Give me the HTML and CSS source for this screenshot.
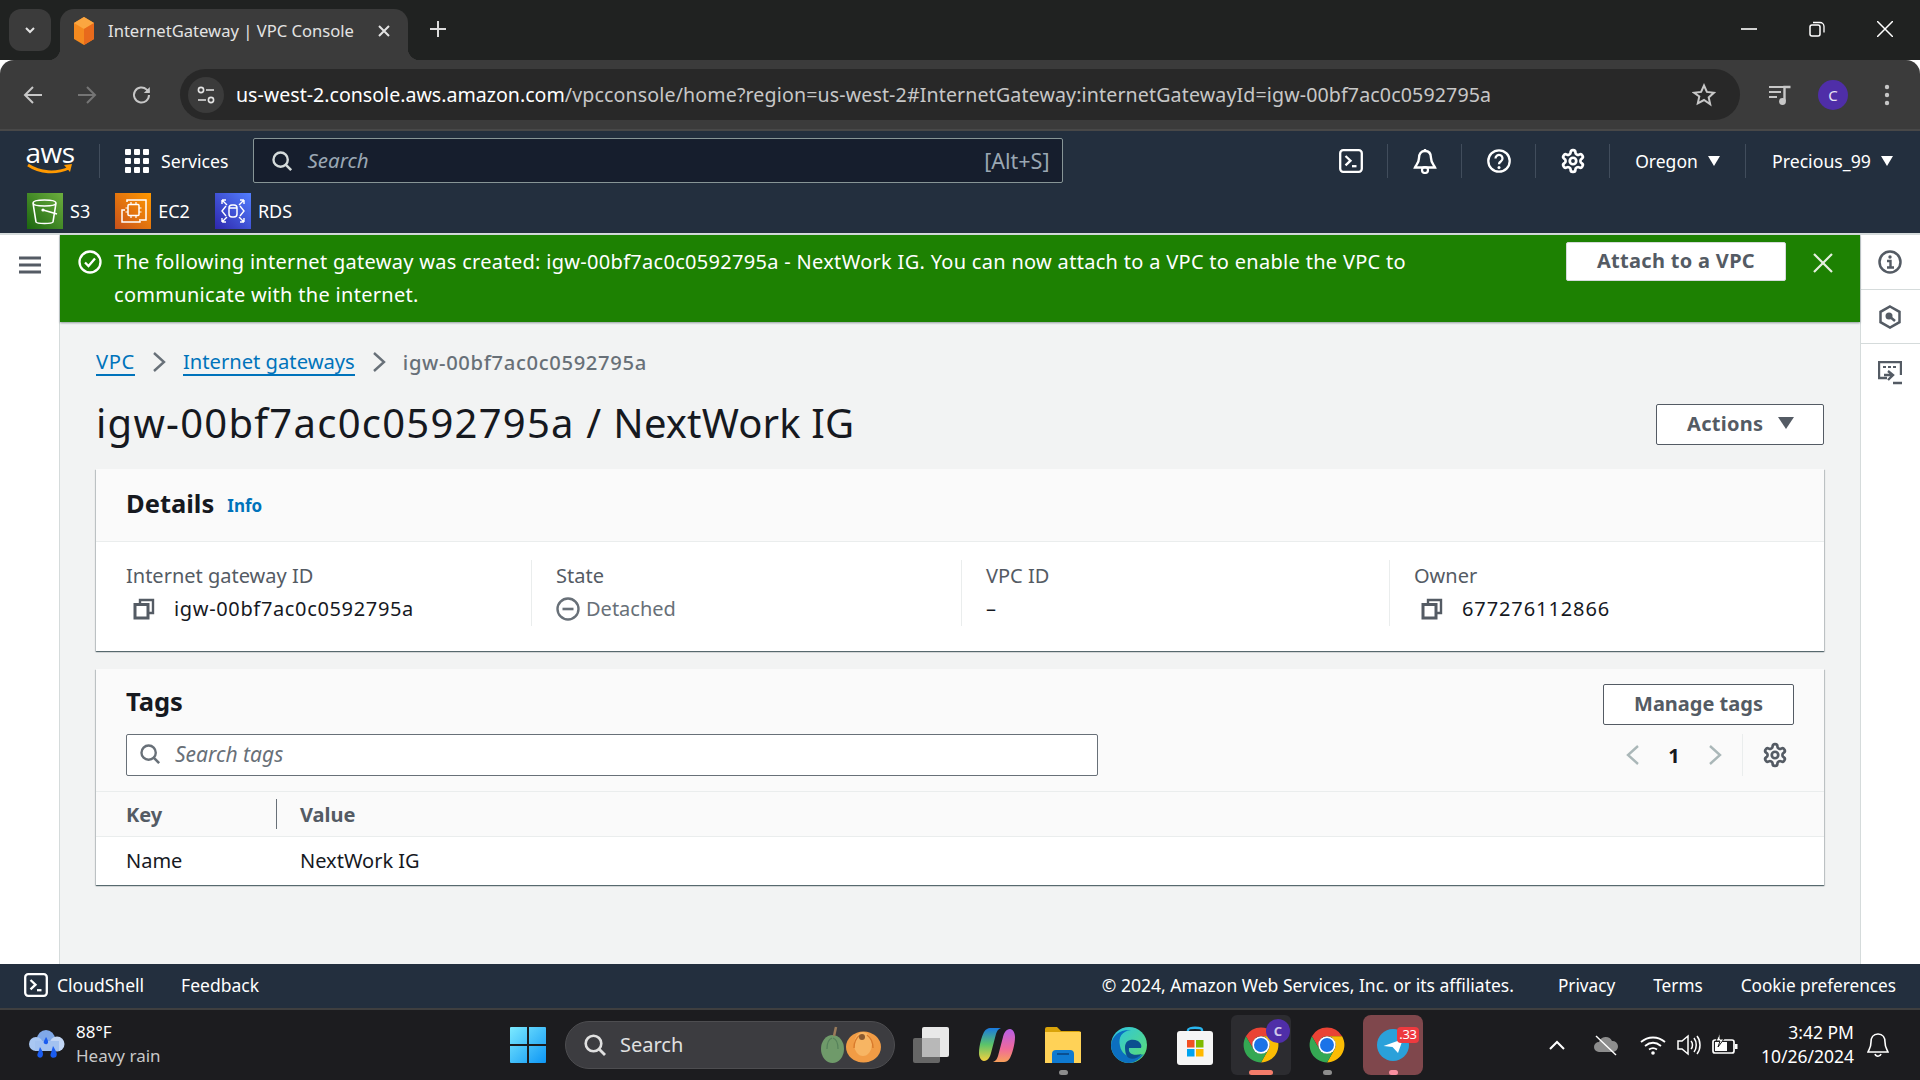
FILE: index.html
```html
<!DOCTYPE html>
<html lang="en">
<head>
<meta charset="utf-8">
<title>InternetGateway | VPC Console</title>
<link rel="stylesheet" href="styles.css">
</head>
<body>
<svg class="defs" width="0" height="0" aria-hidden="true">
  <symbol id="gear" viewBox="0 0 24 24"><path fill="none" stroke="currentColor" stroke-width="2.500" d="M12.22 2h-.44a2 2 0 0 0-2 2v.18a2 2 0 0 1-1 1.73l-.43.25a2 2 0 0 1-2 0l-.15-.08a2 2 0 0 0-2.73.73l-.22.38a2 2 0 0 0 .73 2.73l.15.1a2 2 0 0 1 1 1.72v.51a2 2 0 0 1-1 1.74l-.15.09a2 2 0 0 0-.73 2.73l.22.38a2 2 0 0 0 2.73.73l.15-.08a2 2 0 0 1 2 0l.43.25a2 2 0 0 1 1 1.73V20a2 2 0 0 0 2 2h.44a2 2 0 0 0 2-2v-.18a2 2 0 0 1 1-1.73l.43-.25a2 2 0 0 1 2 0l.15.08a2 2 0 0 0 2.73-.73l.22-.39a2 2 0 0 0-.73-2.73l-.15-.08a2 2 0 0 1-1-1.74v-.5a2 2 0 0 1 1-1.74l.15-.09a2 2 0 0 0 .73-2.73l-.22-.38a2 2 0 0 0-2.73-.73l-.15.08a2 2 0 0 1-2 0l-.43-.25a2 2 0 0 1-1-1.73V4a2 2 0 0 0-2-2z"/><circle cx="12" cy="12" r="3" fill="none" stroke="currentColor" stroke-width="2.500"/></symbol>
  <symbol id="mag" viewBox="0 0 24 24"><circle cx="10.5" cy="10.5" r="7.8" fill="none" stroke="currentColor" stroke-width="2.6"/><path d="M16 16l6 6" stroke="currentColor" stroke-width="2.8" fill="none"/></symbol>
  <symbol id="term" viewBox="0 0 24 24"><rect x="1.2" y="1.2" width="21.6" height="21.6" rx="3" fill="none" stroke="currentColor" stroke-width="2.3"/><path d="M6.5 7l5 4.7-5 4.7" fill="none" stroke="currentColor" stroke-width="2.3"/><path d="M13 17.2h4.5" stroke="currentColor" stroke-width="2.3"/></symbol>
  <symbol id="copy" viewBox="0 0 22 22"><path d="M7 6V2h13v13h-5" fill="none" stroke="currentColor" stroke-width="2.4"/><rect x="2" y="6.5" width="13" height="13.5" fill="none" stroke="currentColor" stroke-width="3"/></symbol>
  <symbol id="chrome" viewBox="0 0 48 48"><path fill="#ea4335" d="M24 2A22 22 0 0 1 43.05 13H24a11 11 0 0 0-9.53 16.5L4.95 13A22 22 0 0 1 24 2z"/><path fill="#fbbc04" d="M43.05 13A22 22 0 0 1 24 46l9.53-16.5A11 11 0 0 0 24 13z"/><path fill="#34a853" d="M24 46A22 22 0 0 1 4.95 13l9.52 16.5a11 11 0 0 0 19.06 0z"/><circle cx="24" cy="24" r="11" fill="#fff"/><circle cx="24" cy="24" r="8.8" fill="#1a73e8"/></symbol>
</svg>

<header class="tabstrip">
  <div class="tabsearch"><svg width="14" height="14" viewBox="0 0 14 14"><path d="M3 5l4 4 4-4" fill="none" stroke="#e3e3e3" stroke-width="2"/></svg></div>
  <div class="tab">
    <svg class="favicon" width="24" height="30" viewBox="0 0 24 30"><path fill="#f58a1f" d="M12 1l10 6v16l-10 6-10-6V7z"/><path fill="#fba640" d="M12 1l10 6-10 6L2 7z"/><path fill="#e86a1c" d="M12 13v16l10-6V7z"/></svg>
    <span class="tabtitle">InternetGateway | VPC Console</span>
    <svg class="tabx" width="14" height="14" viewBox="0 0 14 14"><path d="M2 2l10 10M12 2L2 12" stroke="#e3e3e3" stroke-width="2"/></svg>
  </div>
  <svg class="tabplus" width="18" height="18" viewBox="0 0 18 18"><path d="M9 1v16M1 9h16" stroke="#dcdcdc" stroke-width="2"/></svg>
  <div class="winctl">
    <svg width="16" height="16" viewBox="0 0 16 16"><path d="M0 8h16" stroke="#fff" stroke-width="1.6"/></svg>
    <svg width="16" height="16" viewBox="0 0 16 16"><rect x="1" y="4" width="10" height="11" rx="2" fill="none" stroke="#fff" stroke-width="1.5"/><path d="M4 1.5h7a4 4 0 0 1 4 4v6" fill="none" stroke="#fff" stroke-width="1.3"/></svg>
    <svg width="16" height="16" viewBox="0 0 16 16"><path d="M0 0l16 16M16 0L0 16" stroke="#fff" stroke-width="1.5"/></svg>
  </div>
</header>

<div class="toolbar">
  <svg class="tb tb-back" width="20" height="20" viewBox="0 0 20 20"><path d="M19 10H2M10 2l-8 8 8 8" fill="none" stroke="#c7c7c7" stroke-width="2"/></svg>
  <svg class="tb tb-fwd" width="20" height="20" viewBox="0 0 20 20"><path d="M1 10h17M10 2l8 8-8 8" fill="none" stroke="#757575" stroke-width="2"/></svg>
  <svg class="tb tb-reload" width="20" height="20" viewBox="0 0 20 20"><path d="M17 10a7.5 7.5 0 1 1-2.3-5.4L17 7" fill="none" stroke="#c7c7c7" stroke-width="2"/><path d="M17.8 2v6h-6z" fill="#c7c7c7"/></svg>
  <div class="omnibox">
    <div class="sitebtn"><svg width="20" height="20" viewBox="0 0 20 20"><circle cx="5" cy="5" r="2.6" fill="none" stroke="#e3e3e3" stroke-width="1.6"/><path d="M10 5h8M2 15h8" stroke="#e3e3e3" stroke-width="1.6"/><circle cx="15" cy="15" r="2.6" fill="none" stroke="#e3e3e3" stroke-width="1.6"/></svg></div>
    <div class="url"><span class="urlhost">us-west-2.console.aws.amazon.com</span><span class="urlpath">/vpcconsole/home?region=us-west-2#InternetGateway:internetGatewayId=igw-00bf7ac0c0592795a</span></div>
    <svg class="star" width="24" height="24" viewBox="0 0 24 24"><path d="M12 2.5l2.9 6.4 7 .8-5.2 4.7 1.5 6.9L12 17l-6.2 3.3 1.5-6.9L2.100 9.700l7-.8z" fill="none" stroke="#c7c7c7" stroke-width="2"/></svg>
  </div>
  <svg class="tb tb-media" width="24" height="22" viewBox="0 0 24 22"><path d="M1 3h15M1 8h12M1 13h8" stroke="#c7c7c7" stroke-width="2"/><path d="M16.500 17V3h6" fill="none" stroke="#c7c7c7" stroke-width="2.400"/><circle cx="14.500" cy="17.500" r="3.400" fill="#c7c7c7"/></svg>
  <div class="avatar">C</div>
  <svg class="tb tb-menu" width="6" height="24" viewBox="0 0 6 24"><circle cx="3" cy="4" r="2.200" fill="#c7c7c7"/><circle cx="3" cy="12" r="2.200" fill="#c7c7c7"/><circle cx="3" cy="20" r="2.200" fill="#c7c7c7"/></svg>
</div>

<nav class="awshead">
  <div class="nav1">
    <div class="awslogo"><span class="awsword">aws</span><svg width="46" height="12" viewBox="0 0 46 12"><path d="M1 2c12 8 28 9 41 3" fill="none" stroke="#f90" stroke-width="2.800"/><path d="M37 2l8-1-2 8z" fill="#f90"/></svg></div>
    <div class="services">
      <svg width="24" height="24" viewBox="0 0 24 24" fill="#fff"><rect width="6" height="6" rx="1"/><rect x="9" width="6" height="6" rx="1"/><rect x="18" width="6" height="6" rx="1"/><rect y="9" width="6" height="6" rx="1"/><rect x="9" y="9" width="6" height="6" rx="1"/><rect x="18" y="9" width="6" height="6" rx="1"/><rect y="18" width="6" height="6" rx="1"/><rect x="9" y="18" width="6" height="6" rx="1"/><rect x="18" y="18" width="6" height="6" rx="1"/></svg>
      <span>Services</span>
    </div>
    <div class="globalsearch">
      <svg class="gs-mag" width="22" height="22"><use href="#mag"/></svg>
      <span class="gs-ph">Search</span>
      <span class="gs-key">[Alt+S]</span>
    </div>
    <div class="navright">
      <div class="navcell"><svg width="24" height="24"><use href="#term"/></svg></div>
      <div class="navcell"><svg width="26" height="26" viewBox="0 0 26 26"><path d="M13 3c-4 0-6 3-6 7 0 5-3 7-4 9.500h20c-1-2.500-4-4.500-4-9.500 0-4-2-7-6-7z" fill="none" stroke="currentColor" stroke-width="2.400"/><path d="M13 1v3" stroke="currentColor" stroke-width="2.400"/><circle cx="13" cy="22" r="3" fill="none" stroke="currentColor" stroke-width="2.200"/></svg></div>
      <div class="navcell"><svg width="24" height="24" viewBox="0 0 24 24"><circle cx="12" cy="12" r="10.700" fill="none" stroke="currentColor" stroke-width="2.300"/><path d="M8.500 9.500a3.500 3.500 0 1 1 5.500 2.800c-1.300.9-2 1.500-2 3" fill="none" stroke="currentColor" stroke-width="2.300"/><circle cx="12" cy="18.500" r="1.500" fill="currentColor"/></svg></div>
      <div class="navcell"><svg width="26" height="26"><use href="#gear"/></svg></div>
      <div class="navcell navtext nt-region"><span>Oregon</span><i class="caret"></i></div>
      <div class="navcell navtext nt-user"><span>Precious_99</span><i class="caret"></i></div>
    </div>
  </div>
  <div class="nav2">
    <div class="pin">
      <svg class="pinicon" width="36" height="36" viewBox="0 0 36 36"><defs><linearGradient id="gs3" x1="0" y1="1" x2="1" y2="0"><stop offset="0" stop-color="#1b660f"/><stop offset="1" stop-color="#6cae3e"/></linearGradient></defs><rect width="36" height="36" fill="url(#gs3)"/><path d="M6 10c0-4 23-4 23 0s-23 4-23 0zM6 10l3 19c1 2 16 2 17 0l3-19" fill="none" stroke="#fff" stroke-width="1.600"/><path d="M16 17l14 4" stroke="#fff" stroke-width="1.600"/><circle cx="16" cy="17" r="1.600" fill="#fff"/></svg>
      <span>S3</span>
    </div>
    <div class="pin">
      <svg class="pinicon" width="36" height="36" viewBox="0 0 36 36"><defs><linearGradient id="gec2" x1="0" y1="1" x2="1" y2="0"><stop offset="0" stop-color="#c8511b"/><stop offset="1" stop-color="#f90"/></linearGradient></defs><rect width="36" height="36" fill="url(#gec2)"/><path d="M12 9V7h19v20h-5M10 17H7v12h18v-3" fill="none" stroke="#fff" stroke-width="1.500"/><rect x="13" y="11.500" width="11" height="11" rx="1" fill="none" stroke="#fff" stroke-width="1.500"/><path d="M16 9v2.500M21 9v2.500M16 22.500V25M21 22.500V25M10.500 15H13M10.500 19H13M24 15h2.500M24 19h2.500" stroke="#fff" stroke-width="1.200"/></svg>
      <span>EC2</span>
    </div>
    <div class="pin">
      <svg class="pinicon" width="36" height="36" viewBox="0 0 36 36"><defs><linearGradient id="grds" x1="0" y1="1" x2="1" y2="0"><stop offset="0" stop-color="#2e27ad"/><stop offset="1" stop-color="#527fff"/></linearGradient></defs><rect width="36" height="36" fill="url(#grds)"/><rect x="14" y="12" width="8" height="12" rx="3" fill="none" stroke="#fff" stroke-width="1.500"/><path d="M14 15h8M11 13l-4 5 4 5M25 13l4 5-4 5M7 7l5 5M7 7h4M7 7v4M29 7l-5 5M29 7h-4M29 7v4M7 29l5-5M7 29h4M7 29v-4M29 29l-5-5M29 29h-4M29 29v-4" fill="none" stroke="#fff" stroke-width="1.400"/></svg>
      <span>RDS</span>
    </div>
  </div>
</nav>

<div class="app">
  <aside class="leftnav">
    <svg width="22" height="18" viewBox="0 0 22 18"><path d="M0 2h22M0 9h22M0 16h22" stroke="#545b64" stroke-width="3"/></svg>
  </aside>
  <main class="main">
    <div class="flash">
      <svg class="flash-ok" width="24" height="24" viewBox="0 0 24 24"><circle cx="12" cy="12" r="10.500" fill="none" stroke="#fff" stroke-width="2.300"/><path d="M7 12.500l3.500 3.500 6.500-7.500" fill="none" stroke="#fff" stroke-width="2.300"/></svg>
      <p class="flash-text">The following internet gateway was created: igw-00bf7ac0c0592795a - NextWork IG. You can now attach to a VPC to enable the VPC to communicate with the internet.</p>
      <button class="btn btn-attach">Attach to a VPC</button>
      <svg class="flash-x" width="20" height="20" viewBox="0 0 20 20"><path d="M1 1l18 18M19 1L1 19" stroke="#e6efe0" stroke-width="2.200"/></svg>
    </div>
    <div class="content">
      <div class="crumbs">
        <a class="crumb crumb-vpc">VPC</a>
        <svg class="crumbsep" width="14" height="22" viewBox="0 0 14 22"><path d="M2 2l10 9-10 9" fill="none" stroke="#687078" stroke-width="2.400"/></svg>
        <a class="crumb">Internet gateways</a>
        <svg class="crumbsep" width="14" height="22" viewBox="0 0 14 22"><path d="M2 2l10 9-10 9" fill="none" stroke="#687078" stroke-width="2.400"/></svg>
        <span class="crumb-cur">igw-00bf7ac0c0592795a</span>
      </div>
      <div class="pagehead">
        <h1><span class="h1-id">igw-00bf7ac0c0592795a</span> / <span class="h1-name">NextWork IG</span></h1>
        <button class="btn btn-actions">Actions<i class="caret caret-dark"></i></button>
      </div>
      <section class="card">
        <div class="cardhead"><h2>Details</h2><a class="info">Info</a></div>
        <div class="kvgrid">
          <div class="kv"><div class="kv-l">Internet gateway ID</div><div class="kv-v kv-copy"><svg width="22" height="22"><use href="#copy"/></svg><span class="idtext">igw-00bf7ac0c0592795a</span></div></div>
          <div class="kv"><div class="kv-l">State</div><div class="kv-v kv-state"><svg width="24" height="24" viewBox="0 0 24 24"><circle cx="12" cy="12" r="10.500" fill="none" stroke="#687078" stroke-width="2.400"/><path d="M6.500 12h11" stroke="#687078" stroke-width="2.600"/></svg><span>Detached</span></div></div>
          <div class="kv"><div class="kv-l">VPC ID</div><div class="kv-v">–</div></div>
          <div class="kv"><div class="kv-l">Owner</div><div class="kv-v kv-copy"><svg width="22" height="22"><use href="#copy"/></svg><span class="ownertext">677276112866</span></div></div>
        </div>
      </section>
      <section class="card">
        <div class="tagshead">
          <div class="tagsrow1"><h2 class="tags-title">Tags</h2><button class="btn btn-manage">Manage tags</button></div>
          <div class="tagsrow2">
            <div class="tagsearch"><svg width="22" height="22"><use href="#mag"/></svg><span>Search tags</span></div>
            <div class="pager">
              <svg width="24" height="24" viewBox="0 0 24 24"><path d="M17 3l-10 9 10 9" fill="none" stroke="#aab7b8" stroke-width="2.400"/></svg>
              <span class="pagenum">1</span>
              <svg width="24" height="24" viewBox="0 0 24 24"><path d="M7 3l10 9-10 9" fill="none" stroke="#aab7b8" stroke-width="2.400"/></svg>
              <div class="pagesep"><svg width="26" height="26"><use href="#gear"/></svg></div>
            </div>
          </div>
        </div>
        <div class="tablehead"><div class="th th-key">Key</div><div class="th th-val">Value</div></div>
        <div class="tablerow"><div class="td td-key">Name</div><div class="td td-val">NextWork IG</div></div>
      </section>
    </div>
  </main>
  <aside class="rightnav">
    <div class="rn-cell rn-first"><svg width="24" height="24" viewBox="0 0 24 24"><circle cx="12" cy="12" r="10.500" fill="none" stroke="#545b64" stroke-width="2.500"/><path d="M9 11h3.500v6M9 17.500h7" fill="none" stroke="#545b64" stroke-width="2.400"/><circle cx="12" cy="7" r="1.700" fill="#545b64"/></svg></div>
    <div class="rn-cell"><svg width="24" height="24" viewBox="0 0 24 24"><path d="M12 1.500l9.500 5.300v10.400L12 22.500l-9.500-5.300V6.800z" fill="none" stroke="#545b64" stroke-width="2.500"/><circle cx="11" cy="11" r="3.500" fill="#545b64"/><path d="M11 11l6 5" stroke="#545b64" stroke-width="2.500"/></svg></div>
    <div class="rn-cell rn-last"><svg width="24" height="24" viewBox="0 0 24 24"><path d="M9 17H1V1h22v13" fill="none" stroke="#545b64" stroke-width="2.400"/><path d="M5 5h3v2H5zM10 5h3v2h-3zM15 5h3v2h-3z" fill="#545b64"/><path d="M6 14h8M10 10l5 4-5 5M15 22h9" fill="none" stroke="#545b64" stroke-width="2.400"/></svg></div>
  </aside>
</div>

<footer class="awsfoot">
  <svg class="foot-term" width="24" height="24"><use href="#term"/></svg>
  <span class="foot-cs">CloudShell</span>
  <span class="foot-fb">Feedback</span>
  <span class="foot-copy">© 2024, Amazon Web Services, Inc. or its affiliates.</span>
  <span class="foot-link foot-priv">Privacy</span>
  <span class="foot-link">Terms</span>
  <span class="foot-link">Cookie preferences</span>
</footer>

<div class="taskbar">
  <div class="weather">
    <svg width="38" height="32" viewBox="0 0 38 32"><circle cx="18" cy="10" r="9" fill="#7fa8e8"/><circle cx="8" cy="15" r="7" fill="#a9c7f2"/><circle cx="29" cy="15" r="7.500" fill="#c2d6f5"/><rect x="7" y="12" width="24" height="10" fill="#a3c2f0"/><path d="M12 18c3 5 4 7 2 10-3 2-6-1-4-4zM25 17c3 5 5 8 3 11-3 2-7 0-5-4zM18 8c2 3 3 6 1 7-3 1-4-2-3-3z" fill="#1a5cf0"/></svg>
    <div class="wtext"><div class="w1">88°F</div><div class="w2">Heavy rain</div></div>
  </div>
  <div class="tb-center">
    <svg class="winlogo" width="36" height="36" viewBox="0 0 36 36"><defs><linearGradient id="gwin" x1="0" y1="0" x2="1" y2="1"><stop offset="0" stop-color="#7ceaff"/><stop offset="1" stop-color="#0d96f5"/></linearGradient></defs><path fill="url(#gwin)" d="M0 1a1 1 0 0 1 1-1h16v17H0zM19 0h16a1 1 0 0 1 1 1v16H19zM0 19h17v17H1a1 1 0 0 1-1-1zM19 19h17v16a1 1 0 0 1-1 1H19z"/></svg>
    <div class="tbsearch">
      <svg width="24" height="24"><use href="#mag"/></svg>
      <span class="tbsearch-text">Search</span>
      <svg class="pumpkin" width="60" height="38" viewBox="0 0 60 38"><ellipse cx="11.500" cy="23" rx="11.500" ry="14" fill="#6f9a6a"/><path d="M6 23c0-6 2-10 5-11M17 23c0-6-2-10-5-11" fill="none" stroke="#55805a" stroke-width="1.200"/><path d="M13 10l2-9" stroke="#9a7b5a" stroke-width="2.500"/><ellipse cx="42.500" cy="21" rx="17.500" ry="15.500" fill="#f19c45"/><ellipse cx="42" cy="18" rx="9" ry="12" fill="#f7b563"/><path d="M33 22c0-6 2-10 6-13M52 22c0-6-2-10-6-13" fill="none" stroke="#d97a2c" stroke-width="1.400"/><circle cx="41" cy="11" r="3" fill="#8a5a30"/></svg>
    </div>
    <div class="tbicon"><svg width="36" height="36" viewBox="0 0 36 36"><rect y="11" width="27" height="25" rx="2" fill="#666"/><rect x="9" y="0" width="27" height="30" rx="2" fill="#e8e8e8"/><rect x="9" y="11" width="18" height="19" fill="#b8b8b8"/></svg></div>
    <div class="tbicon"><svg width="36" height="34" viewBox="0 0 36 34"><defs><linearGradient id="gcp1" x1="0" y1="0" x2="0" y2="1"><stop offset="0" stop-color="#1a7ae0"/><stop offset=".5" stop-color="#5bc36a"/><stop offset="1" stop-color="#f4d03f"/></linearGradient><linearGradient id="gcp2" x1="0" y1="0" x2="0" y2="1"><stop offset="0" stop-color="#b85ee8"/><stop offset=".6" stop-color="#f06a9a"/><stop offset="1" stop-color="#f7a05a"/></linearGradient></defs><path fill="url(#gcp1)" d="M11 0h11c-3 1-4 3-5 6l-5 19c-1 4-3 8-7 8-3 0-5-4-5-8C0 17 3 8 5 4 7 1 9 0 11 0z"/><path fill="url(#gcp2)" d="M25 34H14c3-1 4-3 5-6l5-19c1-4 3-8 7-8 3 0 5 4 5 8 0 8-3 17-5 21-2 3-4 4-6 4z"/></svg></div>
    <div class="tbicon tb-dot"><svg width="36" height="40" viewBox="0 0 36 40"><path fill="#d9a30a" d="M0 4a2 2 0 0 1 2-2h10l4 4h18a2 2 0 0 1 2 2v6H0z"/><path fill="#ffd257" d="M0 7h36v31H0z"/><path fill="#0f7ad1" d="M7 38V29a4 4 0 0 1 4-4h14a4 4 0 0 1 4 4v9z"/><path d="M12 29h12" stroke="#0a4f91" stroke-width="2"/></svg></div>
    <div class="tbicon"><svg width="36" height="36" viewBox="0 0 36 36"><defs><linearGradient id="gedge" x1="0" y1="0" x2="1" y2="1"><stop offset="0" stop-color="#2bc4e8"/><stop offset="1" stop-color="#5fde6a"/></linearGradient></defs><circle cx="18" cy="18" r="18" fill="url(#gedge)"/><path fill="#0c6fc0" d="M0 18C1 8 10 2 20 3c-9 1-13 7-11 16 2 10 12 14 24 8-5 6-10 9-15 9C8 36 0 28 0 18z"/><path fill="#0b4f8f" d="M14 20c0-7 7-9 13-6 3 2 4 5 3 7H18c-1 6 4 8 13 6-4 4-9 6-13 4-3-2-4-6-4-11z"/></svg></div>
    <div class="tbicon"><svg width="36" height="40" viewBox="0 0 36 40"><path d="M11 9V5c0-3 14-3 14 0v4" fill="none" stroke="#29b6f0" stroke-width="2.400"/><rect y="6" width="36" height="34" rx="3" fill="#f5f5f5"/><rect x="10" y="15" width="7.500" height="7.500" fill="#f25022"/><rect x="19" y="15" width="7.500" height="7.500" fill="#7fba00"/><rect x="10" y="24" width="7.500" height="7.500" fill="#00a4ef"/><rect x="19" y="24" width="7.500" height="7.500" fill="#ffb900"/></svg></div>
    <div class="tbicon tb-active"><svg width="38" height="38"><use href="#chrome"/></svg><span class="profilechip">C</span></div>
    <div class="tbicon tb-dot"><svg width="38" height="38"><use href="#chrome"/></svg></div>
    <div class="tbicon tb-tele"><svg width="32" height="32" viewBox="0 0 32 32"><circle cx="16" cy="16" r="16" fill="#2aa1da"/><path d="M6.500 17L26 10l-5 14-5.500-6z" fill="#fff"/></svg><span class="badge">.33</span></div>
  </div>
  <div class="tray">
    <svg class="tr-up" width="16" height="10" viewBox="0 0 16 10"><path d="M1 9l7-7 7 7" fill="none" stroke="#fff" stroke-width="2"/></svg>
    <svg class="tr-od" width="26" height="22" viewBox="0 0 26 22"><path d="M6 18a5 5 0 0 1 0-10 7 7 0 0 1 13-1 5.500 5.500 0 0 1 1 11z" fill="#8d8d8d"/><path d="M3 2l20 19" stroke="#fff" stroke-width="1.400"/></svg>
    <svg class="tr-wifi" width="26" height="20" viewBox="0 0 26 20"><path d="M1 7c7-6 17-6 24 0M5 11c5-4 11-4 16 0M9 14.500c3-2 5-2 8 0" fill="none" stroke="#fff" stroke-width="1.800"/><circle cx="13" cy="18" r="1.800" fill="#fff"/></svg>
    <svg class="tr-vol" width="24" height="22" viewBox="0 0 24 22"><path d="M1 7v8h4l6 5V2L5 7z" fill="none" stroke="#fff" stroke-width="1.500"/><path d="M14 7c2 2 2 6 0 8M17 4c3 4 3 10 0 14M20 2c4 5 4 13 0 18" fill="none" stroke="#fff" stroke-width="1.500"/></svg>
    <svg class="tr-bat" width="26" height="26" viewBox="0 0 26 26"><rect x="1" y="8" width="21" height="13" rx="2" fill="none" stroke="#fff" stroke-width="1.700"/><rect x="3" y="10" width="12" height="9" fill="#fff"/><rect x="23" y="12" width="2.500" height="5" fill="#fff"/><path d="M8 1L4 9h4l-2 6 6-8H8z" fill="#fff" stroke="#1c1c1c"/></svg>
    <div class="clock"><div>3:42 PM</div><div>10/26/2024</div></div>
    <svg class="tr-bell" width="22" height="26" viewBox="0 0 22 26"><path d="M11 2C6 2 4 6 4 10c0 6-2 7-3 10h20c-1-3-3-4-3-10 0-4-2-8-7-8z" fill="none" stroke="#fff" stroke-width="1.600"/><path d="M8 22c1 3 5 3 6 0" fill="none" stroke="#fff" stroke-width="1.600"/></svg>
  </div>
</div>
</body>
</html>
```

FILE: styles.css
```css
* { box-sizing: border-box; }
html, body { margin: 0; padding: 0; }
body {
  width: 1920px;
  height: 1080px;
  overflow: hidden;
  display: flex;
  flex-direction: column;
  font-family: "Noto Sans", "Liberation Sans", sans-serif;
  color: #16191f;
  background: #fff;
}
.defs { position: absolute; }
svg { display: block; flex: none; }
h1, h2, p { margin: 0; font-weight: normal; }

/* browser chrome */
.tabstrip { height: 60px; background: #202221; display: flex; align-items: flex-start; position: relative; }
.tabsearch { width: 42px; height: 42px; margin: 9px 0 0 9px; background: #3b3b3b; border-radius: 12px; display: flex; align-items: center; justify-content: center; }
.tab { width: 348px; height: 51px; margin: 9px 0 0 9px; background: #3b3b3b; border-radius: 14px 14px 0 0; display: flex; align-items: center; padding: 0 0 8px 12px; position: relative; }
.tab::after { content: ""; position: absolute; right: -12px; bottom: 0; width: 12px; height: 12px; background: radial-gradient(circle at 100% 0, transparent 12px, #3b3b3b 12.5px); }
.tab::before { content: ""; position: absolute; left: -12px; bottom: 0; width: 12px; height: 12px; background: radial-gradient(circle at 0 0, transparent 12px, #3b3b3b 12.5px); }
.tabtitle { margin-left: 12px; font-size: 16.600px; color: #e3e3e3; width: 257px; white-space: nowrap; }
.tabx { margin-left: 12px; }
.tabplus { margin: 20px 0 0 21px; }
.winctl { margin-left: auto; display: flex; gap: 52px; padding: 21px 27px 0 0; }

.toolbar { height: 71px; background: #3b3b3b; border-bottom: 2px solid #484848; border-radius: 14px 14px 0 0; display: flex; align-items: center; position: relative; }
.tb-back { margin-left: 23px; }
.tb-fwd { margin-left: 34px; }
.tb-reload { margin-left: 35px; }
.omnibox { margin-left: 28px; width: 1560px; height: 51px; background: #282828; border-radius: 26px; display: flex; align-items: center; padding-left: 8px; }
.sitebtn { width: 36px; height: 36px; border-radius: 50%; background: #3b3b3b; display: flex; align-items: center; justify-content: center; }
.url { margin-left: 12px; font-size: 19.600px; color: #c7c7c7; white-space: nowrap; }
.urlhost { color: #fff; }
.urlpath { letter-spacing: .13px; }
.star { margin-left: auto; margin-right: 24px; }
.tb-media { margin-left: 28px; }
.avatar { width: 30px; height: 30px; margin-left: 26px; border-radius: 50%; background: #4f2ea8; color: #e8e3f5; font-size: 15px; display: flex; align-items: center; justify-content: center; }
.tb-menu { margin-left: 36px; }

/* aws header */
.awshead { height: 102px; background: #232f3e; color: #fff; font-size: 18px; display: flex; flex-direction: column; }
.nav1 { height: 59px; display: flex; align-items: center; padding-left: 27px; }
.awslogo { width: 46px; display: flex; flex-direction: column; align-items: center; }
.awsword { font-family: "Open Sans", sans-serif; font-size: 28px; line-height: 22px; letter-spacing: -.6px; height: 22px; margin-top: -6px; }
.services { margin-left: 26px; padding-left: 25px; height: 34px; border-left: 1px solid #414d5c; display: flex; align-items: center; gap: 12px; font-size: 17.700px; }
.globalsearch { margin-left: 25px; width: 810px; height: 45px; background: #161e2d; border: 1px solid #879596; border-radius: 2px; display: flex; align-items: center; padding: 0 13px 0 17px; color: #9aa7b3; }
.gs-mag { color: #d5dbdb; }
.gs-ph { margin-left: 14px; font-size: 20.500px; font-style: italic; padding-bottom: 2px; }
.gs-key { margin-left: auto; font-size: 21.500px; }
.navright { margin-left: auto; display: flex; align-items: center; }
.navcell { height: 34px; border-right: 1px solid #414d5c; width: 74px; display: flex; align-items: center; justify-content: center; color: #fff; }
.navtext { gap: 10px; font-size: 17.500px; }
.nt-region { width: 136px; }
.nt-user { width: 174px; border-right: 0; justify-content: flex-start; padding-left: 26px; gap: 10px; font-size: 17.700px; }
.caret { width: 0; height: 0; border-left: 6px solid transparent; border-right: 6px solid transparent; border-top: 10px solid currentColor; }
.caret-dark { color: #545b64; margin-left: 15px; border-left-width: 8px; border-right-width: 8px; border-top-width: 12px; }
.nav2 { height: 43px; display: flex; padding-left: 27px; align-items: flex-start; padding-top: 3px; gap: 25px; }
.pin { display: flex; align-items: center; gap: 7px; height: 36px; }

/* layout */
.app { height: 731px; display: flex; border-top: 2px solid #d5dbdb; }
.leftnav { width: 60px; border-right: 1px solid #d5dbdb; background: #fff; padding: 21px 0 0 19px; }
.main { flex: 1; display: flex; flex-direction: column; background: #f2f3f3; min-width: 0; }
.rightnav { width: 60px; background: #fff; border-left: 1px solid #d5dbdb; }
.rn-cell { height: 54px; border-bottom: 1px solid #d5dbdb; display: flex; align-items: center; justify-content: center; padding-right: 2px; }
.rn-first { height: 55px; }
.rn-last { border-bottom: 0; height: 58px; }

/* flash */
.flash { height: 87px; background: #1d8102; color: #fff; display: flex; align-items: flex-start; padding: 7px 27px 0 18px; box-shadow: 0 1px 2px rgba(0,28,36,.4); position: relative; }
.flash-ok { margin: 8px 0 0 0; }
.flash-text { width: 1300px; margin-left: 12px; font-size: 20px; line-height: 33px; flex: none; letter-spacing: .3px; margin-top: 3px; }
.btn { font-family: inherit; background: #fff; border: 1px solid #545b64; border-radius: 2px; color: #545b64; font-weight: 700; font-size: 20px; padding: 0 0 2px; letter-spacing: .3px; display: flex; align-items: center; justify-content: center; }
.btn-attach { width: 220px; height: 39px; margin-left: auto; margin-right: 27px; border-color: #d5dbdb; }
.flash-x { margin-top: 11px; }

/* content */
.content { padding: 26px 36px 0 36px; }
.crumbs { height: 28px; display: flex; align-items: center; font-size: 20.200px; gap: 0; }
.crumb { color: #0073bb; border-bottom: 2px solid #0073bb; line-height: 25px; }
.crumb-vpc { letter-spacing: .6px; }
.crumbsep { margin: 0 17px; }
.crumb-cur { color: #687078; font-weight: 500; letter-spacing: .65px; }
.pagehead { margin-top: 28px; height: 40px; display: flex; align-items: center; justify-content: space-between; }
h1 { font-size: 40px; line-height: 46px; color: #16191f; white-space: nowrap; margin-top: -2px; letter-spacing: .95px; }
.h1-id { letter-spacing: 1.250px; }
.h1-name { letter-spacing: .15px; }
.btn-actions { width: 168px; height: 41px; justify-content: flex-start; padding-left: 30px; }
.card { background: #fff; margin-top: 25px; box-shadow: 0 1px 1px rgba(0,28,36,.5), 1px 1px 1px rgba(0,28,36,.15), -1px 1px 1px rgba(0,28,36,.15); }
.card + .card { margin-top: 18px; }
h2 { font-size: 25.500px; font-weight: 700; line-height: 32px; }
.cardhead { height: 73px; background: #fafafa; border-bottom: 1px solid #eaeded; display: flex; align-items: center; padding: 0 0 5px 30px; gap: 13px; }
.info { font-size: 17px; font-weight: 700; color: #0073bb; padding-top: 6px; }
.kvgrid { display: grid; grid-template-columns: 436px 430px 428px 1fr; padding: 18px 0 25px; height: 109px; font-size: 20px; }
.kv { border-right: 1px solid #eaeded; padding-left: 24px; height: 66px; }
.kv:first-child { padding-left: 30px; }
.kv:last-child { border-right: 0; }
.kv-l { color: #545b64; line-height: 32px; height: 32px; }
.kv-v { line-height: 33px; height: 33px; display: flex; align-items: center; }
.kv-copy { padding-left: 7px; gap: 19px; color: #16191f; }
.kv-copy svg { color: #545b64; }
.idtext { letter-spacing: .65px; }
.ownertext { letter-spacing: .9px; }
.kv-state { gap: 6px; color: #687078; }
.tagshead { background: #fafafa; padding: 15px 30px 16px 30px; border-bottom: 1px solid #eaeded; height: 123px; }
.tagsrow1 { height: 40px; display: flex; align-items: center; justify-content: space-between; }
.tags-title { margin-top: -6px; }
.btn-manage { width: 191px; height: 41px; letter-spacing: 0; }
.tagsrow2 { margin-top: 10px; height: 42px; display: flex; align-items: center; }
.tagsearch { width: 972px; height: 42px; background: #fff; border: 1px solid #687078; border-radius: 2px; display: flex; align-items: center; padding: 0 0 2px 12px; gap: 14px; color: #687078; font-size: 21px; font-style: italic; }
.pager { margin-left: auto; margin-right: 6px; display: flex; align-items: center; height: 42px; }
.pagenum { width: 20px; margin: 0 19px; text-align: center; font-size: 20px; font-weight: 700; color: #16191f; }
.pagesep { margin-left: 15px; padding-left: 19px; height: 42px; border-left: 1px solid #eaeded; display: flex; align-items: center; color: #545b64; }
.tablehead { height: 45px; background: #fafafa; border-bottom: 1px solid #eaeded; display: flex; align-items: center; font-size: 20px; font-weight: 700; color: #545b64; }
.th-key { width: 180px; padding-left: 30px; }
.th-val { border-left: 1px solid #687078; height: 30px; padding-left: 23px; line-height: 32px; }
.tablerow { height: 48px; display: flex; align-items: center; font-size: 20px; padding-bottom: 2px; }
.td-key { width: 180px; padding-left: 30px; }
.td-val { padding-left: 24px; }

/* footer */
.awsfoot { height: 44px; background: #232f3e; color: #fff; font-size: 17.500px; display: flex; align-items: center; padding: 0 24px 2px 24px; }
.foot-cs { margin-left: 9px; }
.foot-fb { margin-left: 37px; }
.foot-copy { margin-left: auto; }
.foot-link { margin-left: 38px; font-size: 17.200px; }
.foot-priv { margin-left: 44px; }

/* taskbar */
.taskbar { height: 72px; background: #1c1c1f; border-top: 2px solid #3f3f3f; color: #fff; display: flex; align-items: center; position: relative; }
.weather { width: 510px; display: flex; align-items: center; padding-left: 28px; gap: 10px; font-size: 17px; }
.wtext { padding-bottom: 3px; }
.w1 { line-height: 24px; }
.w2 { line-height: 24px; color: #c8c8c8; }
.tb-center { display: flex; align-items: center; }
.tbsearch { width: 330px; height: 48px; margin-left: 19px; background: #3c3c40; border: 1px solid #4d4d50; border-radius: 24px; display: flex; align-items: center; padding-left: 17px; color: #e0e0e0; font-size: 20px; gap: 13px; }
.tbsearch-text { padding-bottom: 2px; }
.pumpkin { margin-left: auto; margin-right: 13px; }
.tbicon { width: 60px; height: 60px; margin-left: 6px; border-radius: 6px; display: flex; align-items: center; justify-content: center; position: relative; }
.tb-dot::after, .tb-active::after, .tb-tele::after { content: ""; position: absolute; bottom: 0; left: 50%; width: 9px; height: 5px; margin-left: -4px; border-radius: 3px; background: #8d8d8d; }
.tb-active { background: #2c2c30; }
.tb-active::after { width: 24px; margin-left: -12px; background: #f47c6a; }
.tb-tele { background: #7f474c; border-radius: 8px; }
.tb-tele::after { background: #f98fa0; }
.profilechip { position: absolute; top: 4px; right: 1px; width: 24px; height: 24px; border-radius: 50%; background: #4f2ea8; font-size: 13px; font-weight: 700; color: #cfc7ea; display: flex; align-items: center; justify-content: center; }
.badge { position: absolute; top: 12px; right: 4px; width: 22px; height: 16px; background: #ee3a3f; border-radius: 4px; font-size: 13px; line-height: 15px; text-align: center; color: #fff; letter-spacing: -.3px; }
.tray { margin-left: auto; display: flex; align-items: center; padding-right: 31px; }
.tr-od { margin-left: 28px; }
.tr-wifi { margin-left: 21px; }
.tr-vol { margin-left: 11px; }
.tr-bat { margin-left: 11px; }
.clock { margin-left: 21px; width: 95px; font-size: 17.500px; line-height: 24px; text-align: right; padding-bottom: 3px; }
.tr-bell { margin-left: 13px; }
```
